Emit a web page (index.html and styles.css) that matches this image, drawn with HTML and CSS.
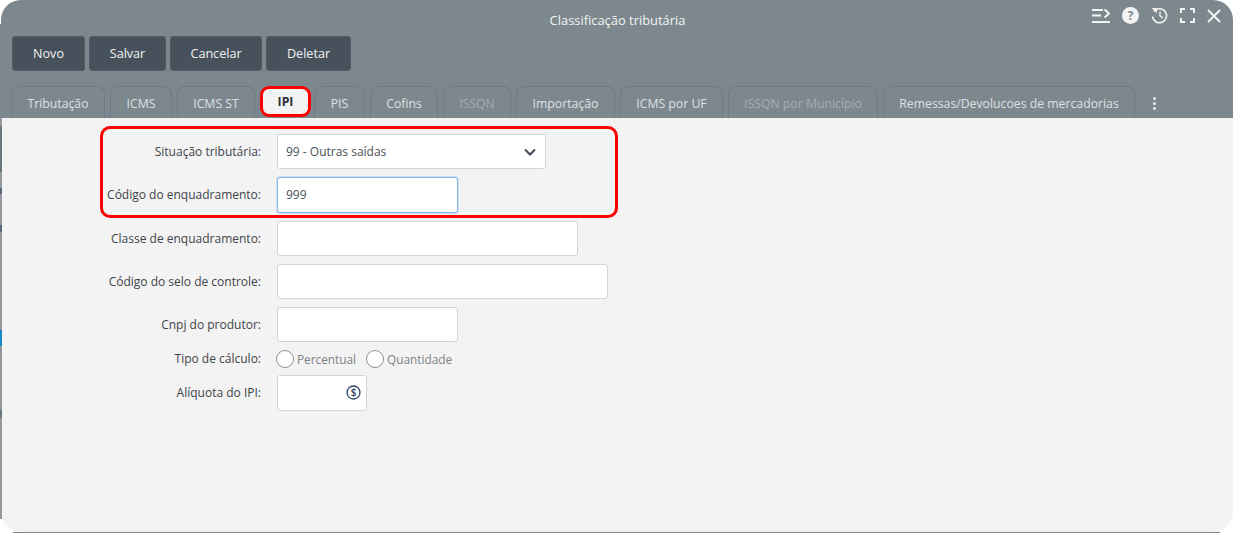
FILE: index.html
```html
<!DOCTYPE html>
<html lang="en">
<head>
    <meta charset="UTF-8">
    <title>Classificação tributária</title>
    <link rel="stylesheet" href="styles.css">
</head>
<body>

<div class="window">
    <div class="head">
        <!-- Title bar -->
        <div class="titlebar">
            <span class="title">Classificação tributária</span>
            <div class="win-icons">
                <svg width="18" height="16" viewBox="0 0 18 16"><path d="M0 2h11M0 7.500h9M0 14h18M12.500 1.500l4.500 4-4.500 4" fill="none" stroke="#f3f3f3" stroke-width="2"/></svg>
                <svg width="17" height="17" viewBox="0 0 17 17"><circle cx="8.500" cy="8.500" r="8.500" fill="#f3f3f3"/><text x="8.500" y="12.500" class="help-mark">?</text></svg>
                <svg width="17" height="17" viewBox="0 0 17 17"><path d="M3 4.500A7 7 0 1 1 1.600 9.500" fill="none" stroke="#f3f3f3" stroke-width="1.600"/><path d="M0.500 1h5.500V6.200z" fill="#f3f3f3"/><path d="M9 4.500v4.500l3 2" fill="none" stroke="#f3f3f3" stroke-width="1.400"/></svg>
                <svg width="15" height="15" viewBox="0 0 15 15"><path d="M1 5V1h4M10 1h4v4M14 10v4h-4M5 14H1v-4" fill="none" stroke="#f3f3f3" stroke-width="2"/></svg>
                <svg width="14" height="14" viewBox="0 0 14 14"><path d="M1 1l12 12M13 1L1 13" fill="none" stroke="#f3f3f3" stroke-width="2"/></svg>
            </div>
        </div>

        <!-- Toolbar -->
        <div class="toolbar">
            <button class="btn btn-novo">Novo</button>
            <button class="btn btn-salvar">Salvar</button>
            <button class="btn btn-cancelar">Cancelar</button>
            <button class="btn btn-deletar">Deletar</button>
        </div>

        <!-- Tabs -->
        <div class="tabs">
            <div class="tab tab-trib">Tributação</div>
            <div class="tab tab-icms">ICMS</div>
            <div class="tab tab-st">ICMS ST</div>
            <div class="tab tab-active">IPI</div>
            <div class="tab tab-pis">PIS</div>
            <div class="tab tab-cofins">Cofins</div>
            <div class="tab tab-issqn disabled">ISSQN</div>
            <div class="tab tab-imp">Importação</div>
            <div class="tab tab-uf">ICMS por UF</div>
            <div class="tab tab-mun disabled">ISSQN por Município</div>
            <div class="tab tab-rem">Remessas/Devolucoes de mercadorias</div>
            <div class="more"><i></i><i></i><i></i></div>
        </div>
    </div>

    <!-- Form -->
    <div class="content">
        <div class="highlight"></div>

        <div class="row">
            <label>Situação tributária:</label>
            <div class="field select w-269">
                <span>99 - Outras saídas</span>
                <svg width="12" height="8" viewBox="0 0 12 8"><path d="M1 1.500l5 5 5-5" fill="none" stroke="#3f4a54" stroke-width="2"/></svg>
            </div>
        </div>
        <div class="row">
            <label>Código do enquadramento:</label>
            <div class="field focus w-181">999</div>
        </div>
        <div class="row">
            <label>Classe de enquadramento:</label>
            <div class="field w-301"></div>
        </div>
        <div class="row">
            <label>Código do selo de controle:</label>
            <div class="field w-331"></div>
        </div>
        <div class="row">
            <label>Cnpj do produtor:</label>
            <div class="field w-181"></div>
        </div>
        <div class="row row-radio">
            <label>Tipo de cálculo:</label>
            <div class="radios">
                <span class="radio"></span><span class="radio-text">Percentual</span>
                <span class="radio radio-2"></span><span class="radio-text">Quantidade</span>
            </div>
        </div>
        <div class="row">
            <label>Alíquota do IPI:</label>
            <div class="field money w-90">
                <svg width="15" height="15" viewBox="0 0 15 15"><circle cx="7.500" cy="7.500" r="6.500" fill="none" stroke="#2f4468" stroke-width="1.300"/><text x="7.500" y="11" class="money-mark">$</text></svg>
            </div>
        </div>
    </div>
</div>

<div class="edge-left"></div>
<div class="edge-bottom"></div>

</body>
</html>
```

FILE: styles.css
```css
html, body {
    margin: 0;
    height: 533px;
    overflow: hidden;
    background: #ffffff;
}

body {
    font-family: "Open Sans", "Noto Sans", Arial, sans-serif;
    font-size: 12px;
}

.window {
    margin-left: 1px;
    height: 533px;
    box-sizing: border-box;
    border-radius: 20px;
    overflow: hidden;
    display: flex;
    flex-direction: column;
    padding-bottom: 1px;
}

.head {
    background: #7c888e;
}

/* App behind the window, showing at the edges */
.edge-left {
    position: absolute;
    left: 0;
    top: 24px;
    bottom: 14px;
    width: 2px;
    background: linear-gradient(to bottom,
        #7c888e 0, #7c888e 94px,
        #92989c 94px, #92989c 102px,
        #6c777d 102px, #6c777d 148px,
        #92989c 148px, #92989c 164px,
        #5a677c 164px, #5a677c 170px,
        #92989c 170px, #92989c 201px,
        #5a677c 201px, #5a677c 208px,
        #92989c 208px, #92989c 306px,
        #1b87c6 306px, #1b87c6 322px,
        #92989c 322px, #92989c 386px,
        #6c777d 386px, #6c777d 394px,
        #92989c 394px);
}

.edge-bottom {
    position: absolute;
    left: 13px;
    right: 13px;
    bottom: 0;
    height: 1px;
    background: #7c888e;
}

/* Title bar */
.titlebar {
    height: 36px;
    display: flex;
    justify-content: center;
    align-items: center;
    position: relative;
    color: #f3f3f3;
    padding-top: 4px;
    box-sizing: border-box;
}

.title {
    font-size: 12.900px;
    padding-left: 1px;
}

.win-icons {
    position: absolute;
    top: 7px;
    right: 12px;
    display: flex;
    align-items: center;
    gap: 12px;
}

.help-mark {
    font-size: 12px;
    font-weight: 700;
    text-anchor: middle;
    fill: #7c888e;
}

/* Toolbar */
.toolbar {
    display: flex;
    gap: 4px;
    padding-left: 11px;
    height: 35px;
}

.btn {
    height: 35px;
    border: 1px solid #505b65;
    border-radius: 3px;
    background: #47515b;
    color: #f3f3f3;
    font-family: inherit;
    font-size: 12.600px;
    padding: 0;
}

.btn-novo { width: 73px; }
.btn-salvar { width: 77px; }
.btn-cancelar { width: 92px; }
.btn-deletar { width: 85px; }

/* Tabs */
.tabs {
    display: flex;
    margin-top: 15px;
    padding-left: 10px;
    gap: 5px;
    height: 32px;
    align-items: flex-end;
}

.tab {
    height: 32px;
    box-sizing: border-box;
    border: 1px solid #6f7c84;
    border-bottom: none;
    border-radius: 8px 8px 0 0;
    color: #dde1e3;
    font-size: 12.250px;
    display: flex;
    align-items: center;
    justify-content: center;
    padding-top: 1px;
}

.tab.disabled { color: #a4acb1; }

.tab-trib { width: 94px; }
.tab-icms { width: 62px; }
.tab-st { width: 78px; }
.tab-pis { width: 51px; margin-left: -2px; }
.tab-cofins { width: 68px; }
.tab-issqn { width: 68px; }
.tab-imp { width: 99px; }
.tab-uf { width: 103px; }
.tab-mun { width: 150px; }
.tab-rem { width: 252px; }

.tab-active {
    width: 51px;
    height: 31px;
    box-sizing: border-box;
    border: 3px solid #fe0000;
    border-radius: 9px;
    background: #f3f3f3;
    color: #2b3238;
    font-weight: 700;
    align-self: flex-start;
    padding-top: 0;
}

.more {
    margin-left: 13px;
    align-self: center;
    display: flex;
    flex-direction: column;
    gap: 2px;
    padding-top: 3px;
}

.more i {
    width: 3px;
    height: 3px;
    border-radius: 50%;
    background: #e6e8e9;
}

/* Form */
.content {
    flex: 1;
    background: #f3f3f3;
    position: relative;
    padding-top: 16px;
    display: flex;
    flex-direction: column;
    gap: 8px;
    border-radius: 0 0 20px 20px;
}

.highlight {
    position: absolute;
    left: 99px;
    top: 8px;
    width: 518px;
    height: 92px;
    box-sizing: border-box;
    border: 3px solid #fe0000;
    border-radius: 10px;
}

.row {
    display: flex;
    align-items: center;
    height: 35.250px;
    color: #3d444a;
}

.row label {
    width: 260px;
    text-align: right;
    margin-right: 16px;
    flex-shrink: 0;
}

.row-radio { height: 17px; }

.field {
    height: 100%;
    box-sizing: border-box;
    background: #ffffff;
    border: 1px solid #d0d5da;
    border-radius: 3px;
    padding: 0 8px;
    display: flex;
    align-items: center;
    color: #495057;
}

.select { justify-content: space-between; padding-right: 9px; }
.focus { border-color: #80b4f0; box-shadow: 0 0 0 1px rgba(128, 180, 240, 0.3); }
.money { justify-content: flex-end; padding-right: 5px; }

.w-90 { width: 90px; }
.w-181 { width: 181px; }
.w-269 { width: 269px; }
.w-301 { width: 301px; }
.w-331 { width: 331px; }

.money-mark {
    font-size: 10px;
    font-weight: 600;
    text-anchor: middle;
    fill: #2f4468;
}

/* Radios */
.radios {
    display: flex;
    align-items: center;
    margin-left: -1px;
}

.radio {
    width: 18px;
    height: 18px;
    flex-shrink: 0;
    box-sizing: border-box;
    border: 1px solid #8a9297;
    border-radius: 50%;
    background: #ffffff;
    margin-right: 3px;
}

.radio-2 { margin-left: 10px; }
.radio-text { color: #7b8287; font-size: 11.800px; }
```
